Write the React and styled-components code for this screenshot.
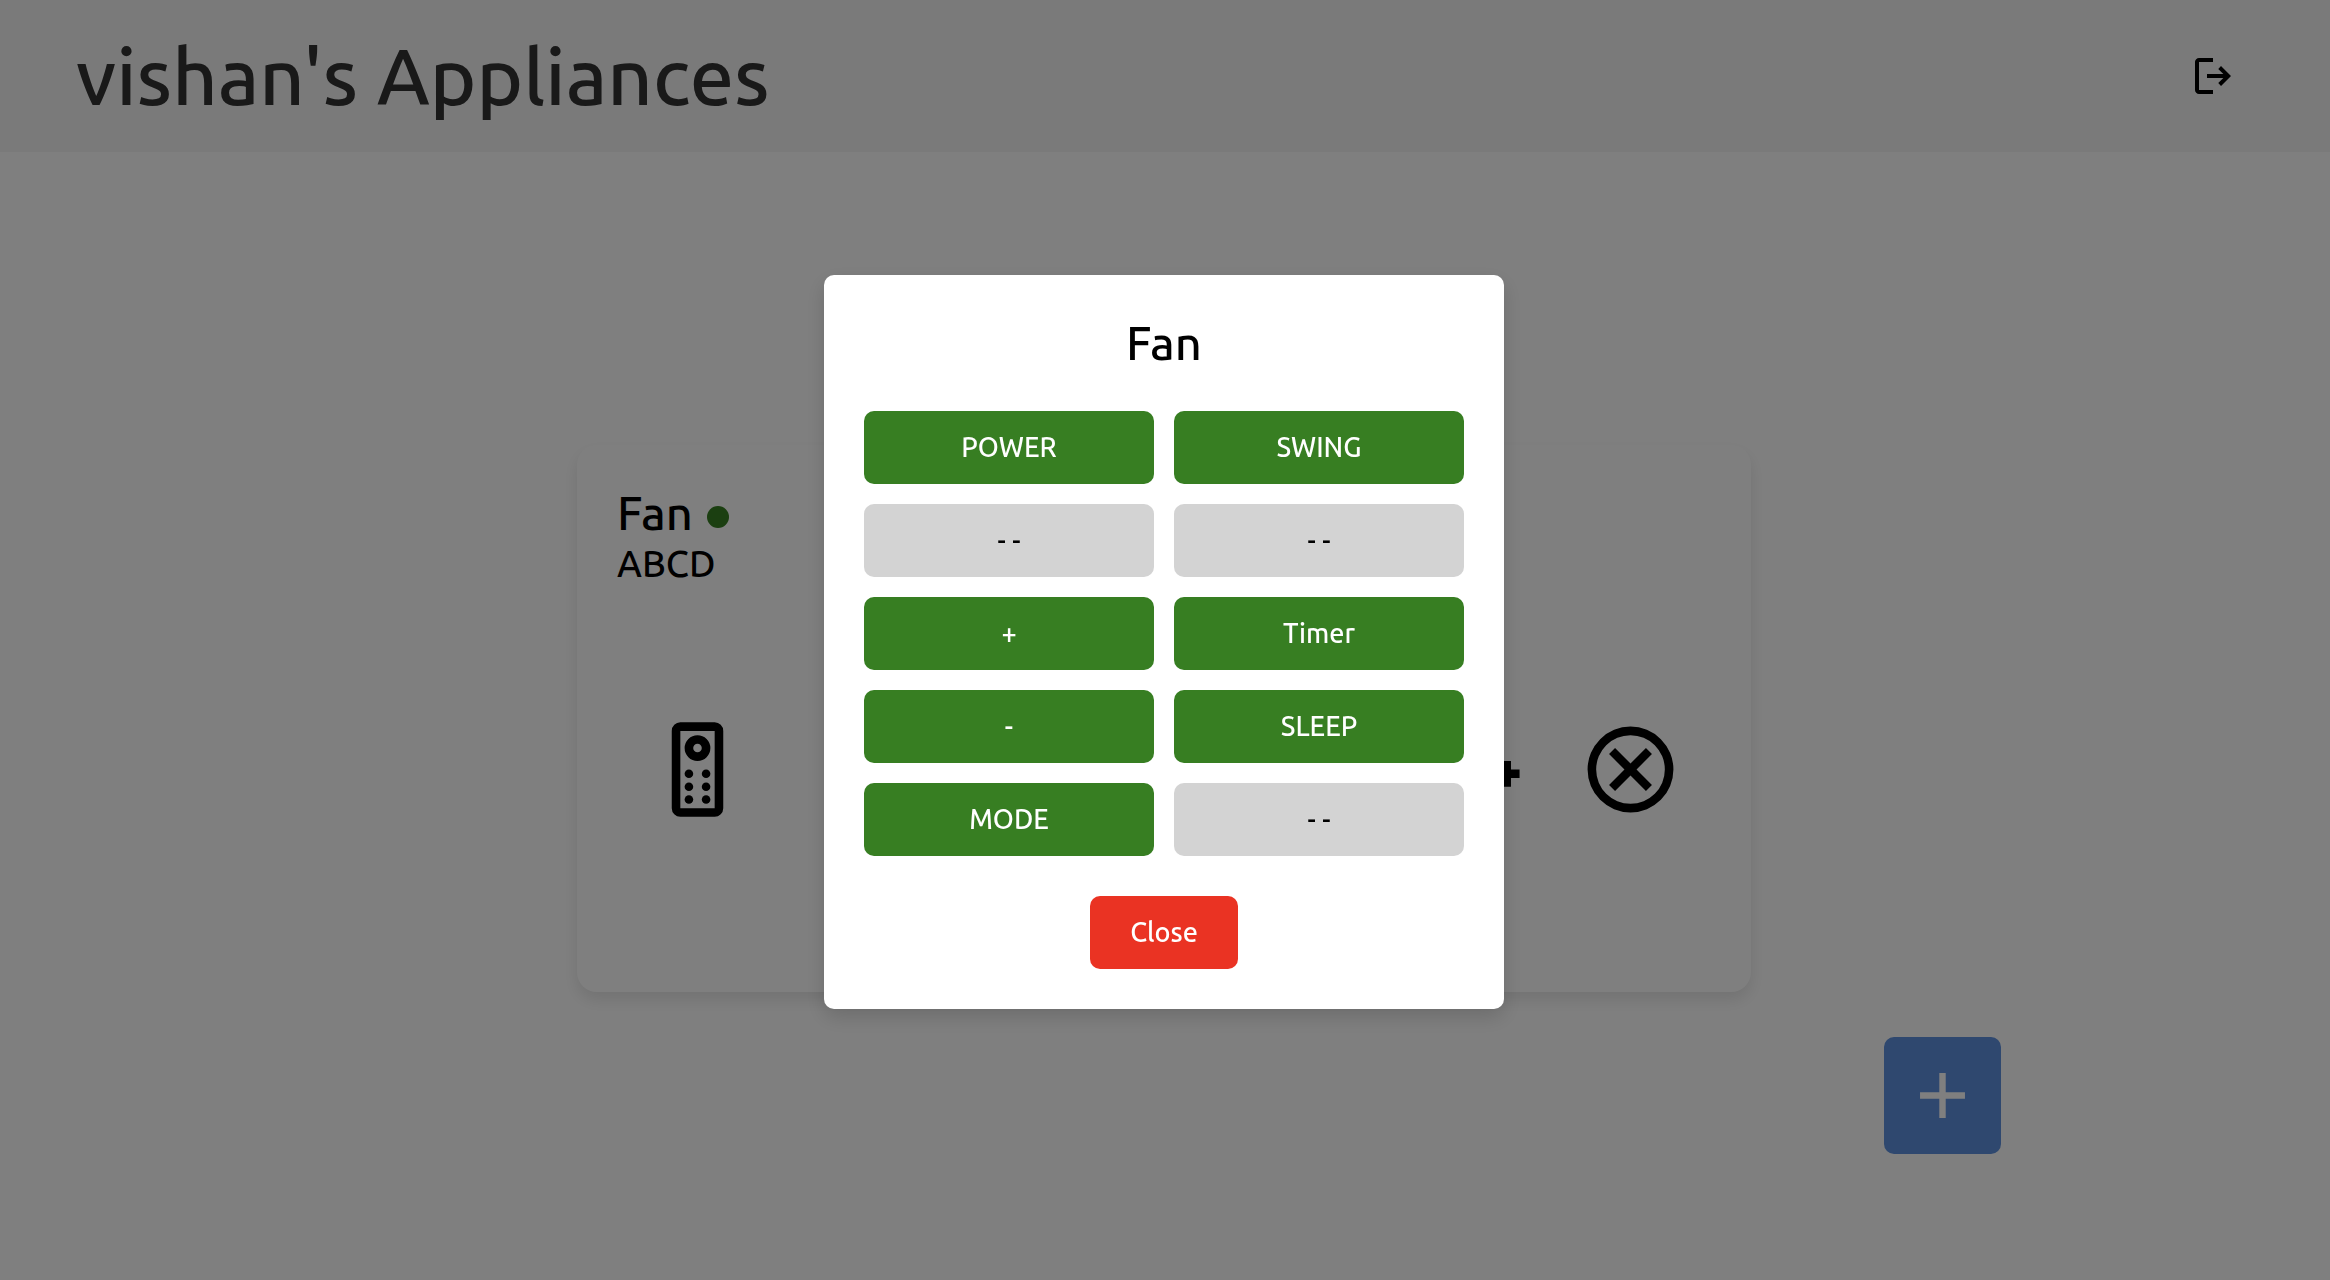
import React from 'react';
import styled, { createGlobalStyle } from 'styled-components';

const GlobalStyle = createGlobalStyle`
  *, *::before, *::after { box-sizing: border-box; }
  body {
    margin: 0;
    background: #fff;
    color: #000;
    font-family: Ubuntu, "Noto Sans", sans-serif;
    font-weight: 500;
  }
  h1, h2, p { margin: 0; font-weight: 500; }
  button { font: inherit; border: 0; padding: 0; cursor: pointer; }
`;

const Page = styled.div`
  display: flex;
  flex-direction: column;
  min-height: 100vh;
`;

const Header = styled.header`
  display: flex;
  align-items: center;
  justify-content: space-between;
  padding: 24px 93px 24px 76px;
  background: #f5f5f5;
`;

const Title = styled.h1`
  color: #333;
  font-size: 79px;
  line-height: 104px;
`;

const IconButton = styled.button`
  display: flex;
  background: none;
  color: #000;
`;

const Icon = styled.svg`
  display: block;
  width: ${(p) => p.$size}px;
  height: ${(p) => p.$size}px;
  fill: currentColor;
`;

const Main = styled.main`
  flex: 1;
  display: flex;
  flex-direction: column;
  align-items: center;
  justify-content: center;
  padding: 5px 2px 0 0;
`;

const Card = styled.article`
  display: flex;
  flex-direction: column;
  width: 1174px;
  max-width: 100%;
  min-height: 547px;
  padding: 40px;
  border-radius: 20px;
  background: #fff;
  box-shadow: 0 8px 16px rgba(0, 0, 0, 0.1);
`;

const CardHeading = styled.div`
  display: flex;
  align-items: center;
  gap: 14px;
`;

const ApplianceName = styled.h2`
  font-size: 47px;
  line-height: 56px;
`;

const StatusDot = styled.span`
  width: 22px;
  height: 22px;
  margin-top: 8px;
  border-radius: 50%;
  background: #377e22;
`;

const Location = styled.p`
  font-size: 37px;
  line-height: 46px;
`;

const CardActions = styled.div`
  flex: 1;
  display: flex;
  align-items: center;
  justify-content: space-between;
  padding: 0 29px;
`;

const ActionGroup = styled.div`
  display: flex;
  gap: 53px;
`;

const AddButton = styled.button`
  position: fixed;
  right: 329px;
  bottom: 126px;
  display: grid;
  place-items: center;
  width: 117px;
  height: 117px;
  border-radius: 10px;
  background: #5e90de;
  color: #fff;
`;

const Overlay = styled.div`
  position: fixed;
  inset: 0;
  display: flex;
  align-items: center;
  justify-content: center;
  padding: 4px 2px 0 0;
  background: rgba(0, 0, 0, 0.5);
`;

const Dialog = styled.section`
  display: flex;
  flex-direction: column;
  align-items: center;
  width: 680px;
  max-width: 100%;
  padding: 40px;
  border-radius: 10px;
  background: #fff;
  box-shadow: 0 8px 20px rgba(0, 0, 0, 0.15);
`;

const DialogTitle = styled.h2`
  margin-bottom: 40px;
  font-size: 47px;
  line-height: 56px;
`;

const Keypad = styled.div`
  display: grid;
  grid-template-columns: 1fr 1fr;
  gap: 20px;
  width: 100%;
  margin-bottom: 40px;
`;

const Button = styled.button`
  padding: 16px 40px;
  border-radius: 10px;
  font-size: 27px;
  line-height: 41px;
  background: ${(p) => p.$color};
  color: ${(p) => (p.$dark ? '#000' : '#fff')};
`;

const keys = ['POWER', 'SWING', null, null, '+', 'Timer', '-', 'SLEEP', 'MODE', null];

const LogoutIcon = () => (
  <Icon $size={48} viewBox="0 0 24 24" aria-hidden="true">
    <path d="M5 21q-.825 0-1.412-.587T3 19V5q0-.825.588-1.412T5 3h7v2H5v14h7v2zm11-4l-1.375-1.45l2.55-2.55H9v-2h8.175l-2.55-2.55L16 7l5 5z" />
  </Icon>
);

const RemoteIcon = () => (
  <Icon $size={103} viewBox="0 0 24 24" aria-hidden="true">
    <path
      fillRule="evenodd"
      d="M8 1h8a2 2 0 0 1 2 2v18a2 2 0 0 1-2 2H8a2 2 0 0 1-2-2V3a2 2 0 0 1 2-2zm0 2v18h8V3z"
    />
    <path fillRule="evenodd" d="M12 4a3 3 0 1 0 0 6a3 3 0 0 0 0-6zm0 2a1 1 0 1 1 0 2a1 1 0 0 1 0-2z" />
    {[13, 16, 19].map((y) => (
      <React.Fragment key={y}>
        <circle cx="10" cy={y} r="1" />
        <circle cx="14" cy={y} r="1" />
      </React.Fragment>
    ))}
  </Icon>
);

const ConfigureIcon = () => (
  <Icon $size={103} viewBox="0 0 24 24" aria-hidden="true">
    <path d="M2 12h12v2H2zM18.5 10h2v2h2v2h-2v2h-2z" />
  </Icon>
);

const RemoveIcon = () => (
  <Icon $size={103} viewBox="0 0 24 24" aria-hidden="true">
    <path
      fillRule="evenodd"
      d="M12 2a10 10 0 1 0 0 20a10 10 0 0 0 0-20zm0 2a8 8 0 1 1 0 16a8 8 0 0 1 0-16z"
    />
    <path d="M8.4 17l3.6-3.6 3.6 3.6 1.4-1.4-3.6-3.6 3.6-3.6L15.6 7 12 10.6 8.4 7 7 8.4l3.6 3.6L7 15.6z" />
  </Icon>
);

const PlusIcon = () => (
  <Icon $size={77} viewBox="0 0 24 24" aria-hidden="true">
    <path d="M19 13h-6v6h-2v-6H5v-2h6V5h2v6h6z" />
  </Icon>
);

export default function App() {
  return (
    <>
      <GlobalStyle />
      <Page>
        <Header>
          <Title>vishan's Appliances</Title>
          <IconButton aria-label="Log out">
            <LogoutIcon />
          </IconButton>
        </Header>
        <Main>
          <Card>
            <CardHeading>
              <ApplianceName>Fan</ApplianceName>
              <StatusDot />
            </CardHeading>
            <Location>ABCD</Location>
            <CardActions>
              <IconButton aria-label="Open remote">
                <RemoteIcon />
              </IconButton>
              <ActionGroup>
                <IconButton aria-label="Configure">
                  <ConfigureIcon />
                </IconButton>
                <IconButton aria-label="Remove">
                  <RemoveIcon />
                </IconButton>
              </ActionGroup>
            </CardActions>
          </Card>
        </Main>
        <AddButton aria-label="Add appliance">
          <PlusIcon />
        </AddButton>
      </Page>
      <Overlay>
        <Dialog role="dialog" aria-modal="true" aria-labelledby="dialog-title">
          <DialogTitle id="dialog-title">Fan</DialogTitle>
          <Keypad>
            {keys.map((label, i) => (
              <Button key={i} type="button" $color={label ? '#377e22' : '#d3d3d3'} $dark={!label}>
                {label || '- -'}
              </Button>
            ))}
          </Keypad>
          <Button type="button" $color="#ea3323">
            Close
          </Button>
        </Dialog>
      </Overlay>
    </>
  );
}
